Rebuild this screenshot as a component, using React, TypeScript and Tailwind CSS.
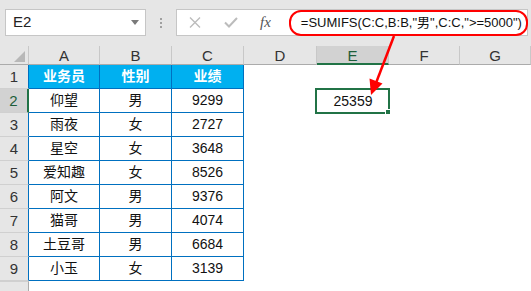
import React from "react";

const rows: [string, string, string][] = [
  ["仰望", "男", "9299"],
  ["雨夜", "女", "2727"],
  ["星空", "女", "3648"],
  ["爱知趣", "女", "8526"],
  ["阿文", "男", "9376"],
  ["猫哥", "男", "4074"],
  ["土豆哥", "男", "6684"],
  ["小玉", "女", "3139"],
];

const letters = ["A", "B", "C", "D", "E", "F", "G"];
const FONT = { fontFamily: '"Liberation Sans", "Noto Sans CJK SC", sans-serif' };

export default function App() {
  return (
    <div
      className="relative w-[531px] h-[291px] overflow-hidden bg-white text-[#222]"
      style={FONT}
    >
      {/* toolbar */}
      <div className="h-[46px] bg-[#e6e6e6] flex items-start pt-[9px]">
        <div className="ml-[5px] w-[141px] h-[27px] bg-white border border-[#c6c6c6] flex items-center pl-[7px] pr-[6px] text-[15px] text-[#222]">
          <span className="flex-1">E2</span>
          <svg width="8" height="5" viewBox="0 0 8 5">
            <path d="M0 0 L8 0 L4 5 Z" fill="#7a7a7a" />
          </svg>
        </div>
        <div className="w-[30px] h-[27px] flex flex-col items-center justify-center gap-[2px]">
          <div className="w-[2px] h-[2px] bg-[#a0a0a0]" />
          <div className="w-[2px] h-[2px] bg-[#a0a0a0]" />
          <div className="w-[2px] h-[2px] bg-[#a0a0a0]" />
        </div>
        <div className="relative w-[352px] h-[27px] bg-white border border-[#c6c6c6] flex items-center">
          <svg className="ml-[12px]" width="12" height="11" viewBox="0 0 12 11">
            <path d="M1 0.5 L11 10.5 M11 0.5 L1 10.5" stroke="#bcbcbc" strokeWidth="1.4" />
          </svg>
          <svg className="ml-[23px]" width="14" height="11" viewBox="0 0 14 11">
            <path d="M1 5.5 L5 9.5 L13 1" stroke="#bcbcbc" strokeWidth="2" fill="none" />
          </svg>
          <span
            className="ml-[22px] text-[15px] italic text-[#555] leading-none"
            style={{ fontFamily: '"Liberation Serif", serif' }}
          >
            fx
          </span>
          <span className="ml-[30px] text-[13px] text-[#111] whitespace-nowrap">
            =SUMIFS(C:C,B:B,"男",C:C,"&gt;=5000")
          </span>
          <div className="absolute left-[112px] top-[0px] w-[239px] h-[26px] border-2 border-[#ff0000] rounded-[12px]" />
        </div>
      </div>

      {/* sheet grid */}
      <div className="grid grid-cols-[29px_71px_72px_72px_73px_72px_71px_71px] grid-rows-[19px_repeat(10,24px)]">
        {/* header row */}
        <div className="relative bg-[#e6e6e6] border-r border-r-[#c8c8c8] border-b border-b-[#ababab]">
          <svg className="absolute left-[14px] top-[5px]" width="11" height="11" viewBox="0 0 11 11">
            <path d="M11 0 L11 11 L0 11 Z" fill="#b8b8b8" />
          </svg>
        </div>
        {letters.map((l) => (
          <div
            key={l}
            className={
              l === "E"
                ? "bg-[#d2d2d2] border-r border-r-[#c8c8c8] border-b-2 border-b-[#217346] flex items-center justify-center pt-[3px] text-[15px] text-[#1e5e3a]"
                : "bg-[#e6e6e6] border-r border-r-[#c8c8c8] border-b border-b-[#ababab] flex items-center justify-center pt-[3px] text-[15px] text-[#333]"
            }
          >
            {l}
          </div>
        ))}

        {/* row 1 */}
        <div className="bg-[#e6e6e6] border-r border-r-[#0070c0] border-b border-b-[#d0d0d0] flex items-center justify-center pt-[2px] text-[15px] text-[#333]">
          1
        </div>
        {["业务员", "性别", "业绩"].map((t) => (
          <div
            key={t}
            className="bg-[#00b0f0] border-r border-b border-[#0070c0] flex items-center justify-center text-[14px] font-bold text-white"
          >
            {t}
          </div>
        ))}
        <div />
        <div />
        <div />
        <div />

        {/* rows 2-9 */}
        {rows.map((r, i) => {
          const n = i + 2;
          const sel = n === 2;
          return (
            <React.Fragment key={n}>
              <div
                className={
                  sel
                    ? "bg-[#d2d2d2] border-r-2 border-r-[#217346] border-b border-b-[#d0d0d0] flex items-center justify-center pt-[2px] text-[15px] text-[#1e5e3a]"
                    : "bg-[#e6e6e6] border-r border-r-[#0070c0] border-b border-b-[#d0d0d0] flex items-center justify-center pt-[2px] text-[15px] text-[#333]"
                }
              >
                {n}
              </div>
              {r.map((t, j) => (
                <div
                  key={j}
                  className="bg-white border-r border-b border-[#0070c0] flex items-center justify-center text-[14px] text-[#111]"
                >
                  {t}
                </div>
              ))}
              <div />
              {sel ? (
                <div className="relative flex items-center justify-center text-[14px] text-[#111]">
                  <div className="absolute left-[-2px] top-[-1px] w-[75px] h-[26px] border-2 border-[#217346]" />
                  <div className="absolute left-[68px] top-[20px] w-[6px] h-[6px] bg-[#217346] border border-white" />
                  <span className="relative">25359</span>
                </div>
              ) : (
                <div />
              )}
              <div />
              <div />
            </React.Fragment>
          );
        })}

        {/* row 10 */}
        <div className="bg-[#e6e6e6] border-r border-r-[#ababab] border-t border-t-[#d0d0d0]" />
      </div>

      {/* red arrow */}
      <svg className="absolute left-0 top-0 pointer-events-none" width="531" height="291">
        <line x1="394" y1="36" x2="376" y2="83" stroke="#ff0000" strokeWidth="2.5" />
        <path d="M371 95 L369.5 78.5 L382.5 83.5 Z" fill="#ff0000" />
      </svg>
    </div>
  );
}
